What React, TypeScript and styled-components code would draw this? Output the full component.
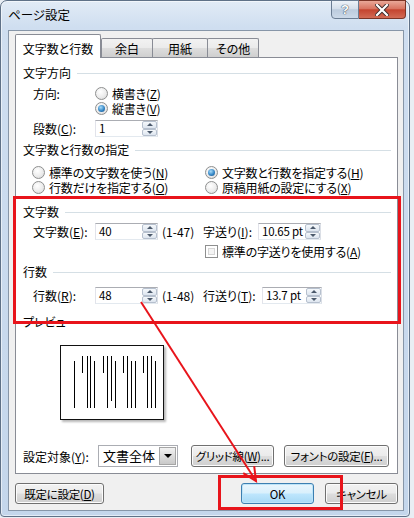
import React from "react";
import styled, { createGlobalStyle, css } from "styled-components";

const GlobalStyle = createGlobalStyle`
  html, body {
    margin: 0;
    padding: 0;
    background: #e9eef4;
  }
  body {
    font-family: "Noto Sans CJK JP", "Noto Sans", sans-serif;
    font-size: 12px;
    font-feature-settings: "palt";
    color: #000;
  }
  * {
    box-sizing: border-box;
  }
`;

const Page = styled.div`
  position: relative;
  width: 414px;
  height: 518px;
  overflow: hidden;
`;

const Win = styled.div`
  width: 410px;
  height: 517px;
  border: 1px solid #5f7187;
  border-radius: 7px 7px 4px 4px;
  background: linear-gradient(180deg, #e2ebf6 0px, #cfdef0 26px, #c4d6eb 100%);
  box-shadow: inset 0 0 0 1px rgba(255, 255, 255, 0.55);
  padding: 0 5px 5px 7px;
  display: flex;
  flex-direction: column;
`;

const TitleBar = styled.div`
  height: 29px;
  display: flex;
  justify-content: space-between;
  align-items: flex-start;
`;

const TitleText = styled.div`
  margin-top: 6px;
  line-height: 16px;
  font-size: 12.5px;
`;

const CaptionGroup = styled.div`
  display: flex;
  margin: -1px -2px 0 0;
`;

const CaptionButton = styled.div<{ $close?: boolean }>`
  height: 19px;
  width: ${(p) => (p.$close ? 47 : 28)}px;
  display: flex;
  align-items: center;
  justify-content: center;
  border: 1px solid #6b7d93;
  color: #fff;
  font-weight: bold;
  font-size: 13px;
  font-family: "Liberation Sans", sans-serif;
  text-shadow: 0 0 1px #2b3a4d, 0 0 1px #2b3a4d;
  ${(p) =>
    p.$close
      ? css`
          border-color: #7b3426;
          border-left: none;
          border-radius: 0 0 4px 0;
          background: linear-gradient(180deg, #e9a898 0%, #d87461 45%, #c4442f 52%, #d26b55 100%);
        `
      : css`
          border-radius: 0 0 0 4px;
          background: linear-gradient(180deg, #edf2f8 0%, #d5dfeb 45%, #bccbdd 52%, #ccd9e9 100%);
        `}
`;

const Client = styled.div`
  flex: 1;
  background: #f0f0f0;
  border: 1px solid #8796a8;
  padding: 3px 5px 0 6px;
  display: flex;
  flex-direction: column;
`;

const TabStrip = styled.div`
  position: relative;
  z-index: 1;
  height: 24px;
  margin-bottom: -1px;
  display: flex;
  align-items: flex-end;
`;

const Tab = styled.div<{ $active?: boolean; $w: number; $ml?: number }>`
  width: ${(p) => p.$w}px;
  margin-left: ${(p) => p.$ml ?? 0}px;
  border: 1px solid #898c95;
  border-bottom: none;
  border-radius: 2px 2px 0 0;
  text-align: center;
  line-height: 16px;
  ${(p) =>
    p.$active
      ? css`
          height: 24px;
          padding-top: 6px;
          background: #fff;
        `
      : css`
          height: 19px;
          margin-bottom: 1px;
          padding-top: 2px;
          background: linear-gradient(180deg, #f2f2f2 0%, #ebebeb 48%, #dddddd 52%, #cfcfcf 100%);
        `}
`;

const Panel = styled.div`
  flex: none;
  height: 417px;
  background: #fff;
  border: 1px solid #898c95;
  padding: 0 6px 6px 7px;
  display: flex;
  flex-direction: column;
`;

const SectionHeader = styled.div<{ $mt: number }>`
  margin-top: ${(p) => p.$mt}px;
  height: 16px;
  line-height: 16px;
  display: flex;
  align-items: center;
  gap: 6px;
  white-space: nowrap;
  &::after {
    content: "";
    flex: 1;
    height: 1px;
    background: #d5dfe5;
  }
`;

const Key = styled.span`
  text-decoration: underline;
  text-underline-offset: 1px;
`;

const DirectionBlock = styled.div`
  margin-top: 5px;
  padding-left: 10px;
  display: grid;
  grid-template-columns: 62px auto;
`;

const RadioStack = styled.div`
  display: flex;
  flex-direction: column;
`;

const OptionLine = styled.div`
  height: 15px;
  line-height: 15px;
  display: flex;
  align-items: center;
  gap: 4px;
  white-space: nowrap;
  letter-spacing: -0.2px;
`;

const RadioMark = styled.span<{ $on?: boolean }>`
  position: relative;
  flex: none;
  width: 13px;
  height: 13px;
  border-radius: 50%;
  border: 1px solid #8e8f8f;
  background: radial-gradient(circle at 40% 35%, #ffffff 0%, #ececec 55%, #d2d2d2 100%);
  ${(p) =>
    p.$on &&
    css`
      &::after {
        content: "";
        position: absolute;
        left: 2px;
        top: 2px;
        width: 7px;
        height: 7px;
        border-radius: 50%;
        background: radial-gradient(circle at 40% 35%, #a9dcfa 0%, #3587c6 55%, #15497d 100%);
      }
    `}
`;

const CheckMark = styled.span`
  flex: none;
  width: 13px;
  height: 13px;
  border: 1px solid #8e8f8f;
  background: #f4f4f4;
  box-shadow: inset 0 0 0 2px #fff, inset 0 0 0 3px #d6d6d6;
`;

const OptionGrid = styled.div`
  margin-top: 7px;
  padding-left: 9px;
  display: grid;
  grid-template-columns: 173px auto;
`;

const FieldRow = styled.div<{ $mt: number; $pl?: number }>`
  margin-top: ${(p) => p.$mt}px;
  padding-left: ${(p) => p.$pl ?? 10}px;
  height: 17px;
  display: flex;
  align-items: center;
  white-space: nowrap;
`;

const FieldLabel = styled.span<{ $w: number }>`
  flex: none;
  width: ${(p) => p.$w}px;
  line-height: 17px;
`;

const SpinBox = styled.div<{ $w: number }>`
  flex: none;
  width: ${(p) => p.$w}px;
  height: 17px;
  display: flex;
  background: #fff;
  border: 1px solid;
  border-color: #abadb3 #dbdfe6 #e3e9ef #e2e3ea;
`;

const SpinValue = styled.span`
  flex: 1;
  padding-left: 3px;
  line-height: 15px;
  font-size: 11.5px;
  letter-spacing: -0.2px;
`;

const SpinArrows = styled.div`
  width: 15px;
  display: flex;
  flex-direction: column;
`;

const SpinHalf = styled.div<{ $down?: boolean }>`
  flex: 1;
  display: flex;
  align-items: center;
  justify-content: center;
  border: 1px solid #b6c0ce;
  border-radius: 2px;
  background: linear-gradient(180deg, #f5f8fb 0%, #dde5ef 100%);
  &::before {
    content: "";
    border-left: 3px solid transparent;
    border-right: 3px solid transparent;
    ${(p) =>
      p.$down
        ? css`
            border-top: 3px solid #4b596b;
          `
        : css`
            border-bottom: 3px solid #4b596b;
          `}
  }
`;

const Range = styled.span`
  flex: none;
  width: 41px;
  margin-left: 4px;
  line-height: 17px;
`;

const PreviewBox = styled.div`
  margin: 15px 0 0 37px;
  width: 104px;
  height: 75px;
  border: 1px solid #111;
  background: #fff;
  box-shadow: 2px 2px 2px rgba(0, 0, 0, 0.28);
`;

const Spacer = styled.div`
  flex: 1;
`;

const ApplyRow = styled.div`
  height: 22px;
  display: flex;
  align-items: center;
  white-space: nowrap;
`;

const SelectBox = styled.div`
  flex: none;
  width: 80px;
  height: 22px;
  display: flex;
  background: #fff;
  border: 1px solid #abadb3;
`;

const SelectValue = styled.span`
  flex: 1;
  padding-left: 4px;
  line-height: 20px;
  font-size: 13px;
`;

const SelectArrow = styled.span`
  width: 17px;
  margin: 1px;
  display: flex;
  align-items: center;
  justify-content: center;
  border: 1px solid #a6a6a6;
  background: linear-gradient(180deg, #f2f2f2 0%, #dcdcdc 50%, #c9c9c9 100%);
  &::before {
    content: "";
    border-left: 4px solid transparent;
    border-right: 4px solid transparent;
    border-top: 4px solid #000;
  }
`;

const Button = styled.div<{ $w: number; $ml?: number; $h?: number; $default?: boolean }>`
  flex: none;
  width: ${(p) => p.$w}px;
  height: ${(p) => p.$h ?? 21}px;
  margin-left: ${(p) => p.$ml ?? 0}px;
  display: flex;
  align-items: center;
  justify-content: center;
  border: 1px solid #707070;
  border-radius: 3px;
  white-space: nowrap;
  font-size: 11.5px;
  letter-spacing: -0.3px;
  background: linear-gradient(180deg, #f2f2f2 0%, #ebebeb 48%, #dddddd 52%, #cfcfcf 100%);
  box-shadow: inset 0 0 0 1px #fcfcfc;
  ${(p) =>
    p.$default &&
    css`
      border-color: #3c7fb1;
      background: linear-gradient(180deg, #eaf6fd 0%, #d9f0fc 48%, #bee6fd 52%, #a7d9f5 100%);
      box-shadow: inset 0 0 0 1px #bde4f8;
    `}
`;

const Footer = styled.div`
  margin-top: 9px;
  display: flex;
  justify-content: space-between;
`;

const FooterRight = styled.div`
  display: flex;
  gap: 11px;
`;

const Highlight = styled.div<{ $x: number; $y: number; $w: number; $h: number }>`
  position: absolute;
  left: ${(p) => p.$x}px;
  top: ${(p) => p.$y}px;
  width: ${(p) => p.$w}px;
  height: ${(p) => p.$h}px;
  border: 3px solid #e8141b;
  pointer-events: none;
`;

const Overlay = styled.svg`
  position: absolute;
  left: 0;
  top: 0;
  pointer-events: none;
`;

const previewLines: [number, number, number][] = [
  [13, 15, 62], [21, 10, 27], [26, 10, 62], [29, 10, 62], [33, 15, 62],
  [42, 10, 27], [46, 10, 62], [50, 10, 55], [54, 15, 62],
  [62, 10, 27], [66, 10, 62], [70, 15, 62], [74, 15, 62],
  [82, 10, 27], [86, 10, 62], [90, 10, 62], [94, 15, 62],
];

const Spin: React.FC<{ w: number; value: React.ReactNode }> = ({ w, value }) => (
  <SpinBox $w={w}>
    <SpinValue>{value}</SpinValue>
    <SpinArrows>
      <SpinHalf />
      <SpinHalf $down />
    </SpinArrows>
  </SpinBox>
);

// arrow from the 行数 field down to the OK button
const ax1 = 141;
const ay1 = 302;
const ax2 = 256;
const ay2 = 481;
const arrowHead = () => {
  const dx = ax2 - ax1;
  const dy = ay2 - ay1;
  const len = Math.hypot(dx, dy);
  const ux = dx / len;
  const uy = dy / len;
  const pts: string[] = [];
  [0.45, -0.45].forEach((a) => {
    const bx = -ux * Math.cos(a) + uy * Math.sin(a);
    const by = -uy * Math.cos(a) - ux * Math.sin(a);
    pts.push(`${ax2 + bx * 15},${ay2 + by * 15}`);
  });
  return `M${pts[0]} L${ax2},${ay2} L${pts[1]}`;
};

const App: React.FC = () => {
  return (
    <Page>
      <GlobalStyle />
      <Win>
        <TitleBar>
          <TitleText>ページ設定</TitleText>
          <CaptionGroup>
            <CaptionButton>?</CaptionButton>
            <CaptionButton $close>
              <svg width="14" height="12" viewBox="0 0 14 12">
                <path d="M2 1 L12 11 M12 1 L2 11" stroke="#3a2a2a" strokeWidth="4" strokeLinecap="square" />
                <path d="M2 1 L12 11 M12 1 L2 11" stroke="#fff" strokeWidth="2.2" strokeLinecap="square" />
              </svg>
            </CaptionButton>
          </CaptionGroup>
        </TitleBar>

        <Client>
          <TabStrip>
            <Tab $active $w={86}>文字数と行数</Tab>
            <Tab $w={52}>余白</Tab>
            <Tab $w={56} $ml={-1}>用紙</Tab>
            <Tab $w={52} $ml={-1}>その他</Tab>
          </TabStrip>

          <Panel>
            <SectionHeader $mt={7}>文字方向</SectionHeader>
            <DirectionBlock>
              <OptionLine>方向:</OptionLine>
              <RadioStack>
                <OptionLine>
                  <RadioMark />
                  <span>横書き(<Key>Z</Key>)</span>
                </OptionLine>
                <OptionLine>
                  <RadioMark $on />
                  <span>縦書き(<Key>V</Key>)</span>
                </OptionLine>
              </RadioStack>
            </DirectionBlock>
            <FieldRow $mt={4}>
              <FieldLabel $w={62}>段数(<Key>C</Key>):</FieldLabel>
              <Spin w={63} value="1" />
            </FieldRow>

            <SectionHeader $mt={5}>文字数と行数の指定</SectionHeader>
            <OptionGrid>
              <OptionLine>
                <RadioMark />
                <span>標準の文字数を使う(<Key>N</Key>)</span>
              </OptionLine>
              <OptionLine>
                <RadioMark $on />
                <span>文字数と行数を指定する(<Key>H</Key>)</span>
              </OptionLine>
              <OptionLine>
                <RadioMark />
                <span>行数だけを指定する(<Key>O</Key>)</span>
              </OptionLine>
              <OptionLine>
                <RadioMark />
                <span>原稿用紙の設定にする(<Key>X</Key>)</span>
              </OptionLine>
            </OptionGrid>

            <SectionHeader $mt={9}>文字数</SectionHeader>
            <FieldRow $mt={3}>
              <FieldLabel $w={62}>文字数(<Key>E</Key>):</FieldLabel>
              <Spin w={63} value="40" />
              <Range>(1-47)</Range>
              <FieldLabel $w={55}>字送り(<Key>I</Key>):</FieldLabel>
              <Spin w={63} value="10.65 pt" />
            </FieldRow>
            <FieldRow $mt={3} $pl={182}>
              <OptionLine>
                <CheckMark />
                <span>標準の字送りを使用する(<Key>A</Key>)</span>
              </OptionLine>
            </FieldRow>

            <SectionHeader $mt={4}>行数</SectionHeader>
            <FieldRow $mt={7}>
              <FieldLabel $w={62}>行数(<Key>R</Key>):</FieldLabel>
              <Spin w={63} value="48" />
              <Range>(1-48)</Range>
              <FieldLabel $w={59}>行送り(<Key>T</Key>):</FieldLabel>
              <Spin w={60} value="13.7 pt" />
            </FieldRow>

            <SectionHeader $mt={10}>プレビュー</SectionHeader>
            <PreviewBox>
              <svg width="102" height="73" viewBox="0 0 102 73">
                {previewLines.map(([x, y1, y2], i) => (
                  <line key={i} x1={x + 0.5} y1={y1} x2={x + 0.5} y2={y2} stroke="#000" strokeWidth="1" />
                ))}
              </svg>
            </PreviewBox>
            <Spacer />

            <ApplyRow>
              <FieldLabel $w={75}>設定対象(<Key>Y</Key>):</FieldLabel>
              <SelectBox>
                <SelectValue>文書全体</SelectValue>
                <SelectArrow />
              </SelectBox>
              <Button $w={83} $ml={13} $h={22}>
                グリッド線(<Key>W</Key>)...
              </Button>
              <Button $w={105} $ml={10} $h={22}>
                フォントの設定(<Key>F</Key>)...
              </Button>
            </ApplyRow>
          </Panel>

          <Footer>
            <Button $w={89}>既定に設定(<Key>D</Key>)</Button>
            <FooterRight>
              <Button $w={73} $default>OK</Button>
              <Button $w={73}>キャンセル</Button>
            </FooterRight>
          </Footer>
        </Client>
      </Win>

      <Highlight $x={13} $y={196} $w={388} $h={128} />
      <Highlight $x={218} $y={475} $w={125} $h={35} />
      <Overlay width="414" height="518">
        <line x1={ax1} y1={ay1} x2={ax2} y2={ay2} stroke="#e8141b" strokeWidth="2" />
        <path d={arrowHead()} stroke="#e8141b" strokeWidth="2" fill="none" />
      </Overlay>
    </Page>
  );
};

export default App;
